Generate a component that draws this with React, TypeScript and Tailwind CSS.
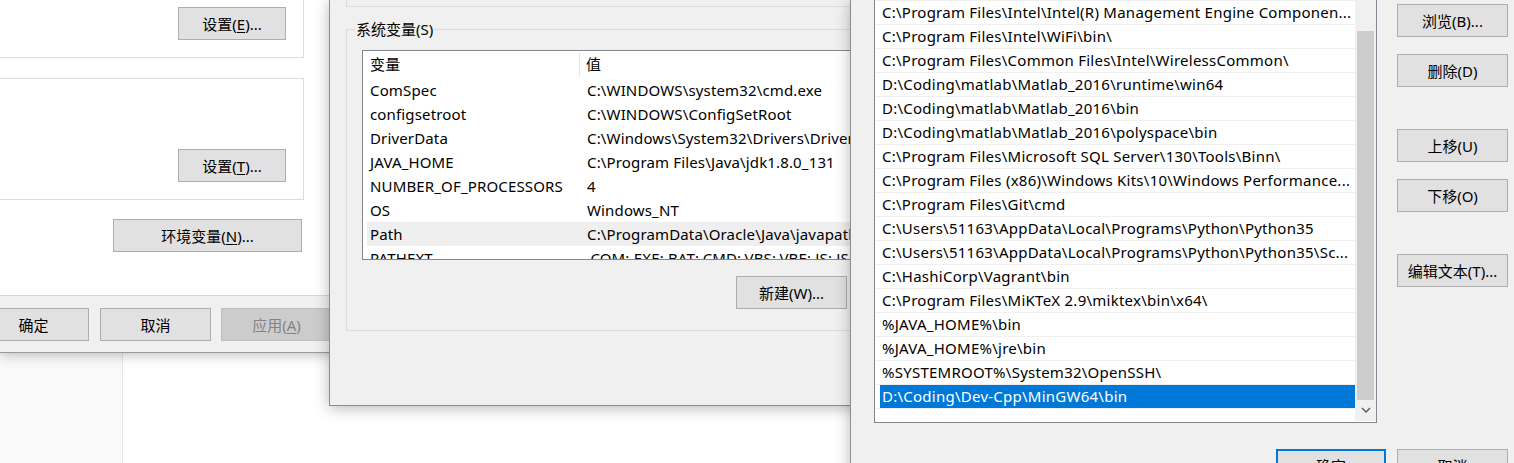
import clsx from 'clsx';
import type { ReactNode } from 'react';

const SYS_VARS = [
  ['ComSpec', 'C:\\WINDOWS\\system32\\cmd.exe'],
  ['configsetroot', 'C:\\WINDOWS\\ConfigSetRoot'],
  ['DriverData', 'C:\\Windows\\System32\\Drivers\\DriverData'],
  ['JAVA_HOME', 'C:\\Program Files\\Java\\jdk1.8.0_131'],
  ['NUMBER_OF_PROCESSORS', '4'],
  ['OS', 'Windows_NT'],
  ['Path', 'C:\\ProgramData\\Oracle\\Java\\javapath;C:\\WINDOWS\\system32'],
  ['PATHEXT', '.COM;.EXE;.BAT;.CMD;.VBS;.VBE;.JS;.JSE;.WSF;.WSH;.MSC'],
];

const PATHS = [
  'C:\\Program Files\\Intel\\Intel(R) Management Engine Componen...',
  'C:\\Program Files\\Intel\\WiFi\\bin\\',
  'C:\\Program Files\\Common Files\\Intel\\WirelessCommon\\',
  'D:\\Coding\\matlab\\Matlab_2016\\runtime\\win64',
  'D:\\Coding\\matlab\\Matlab_2016\\bin',
  'D:\\Coding\\matlab\\Matlab_2016\\polyspace\\bin',
  'C:\\Program Files\\Microsoft SQL Server\\130\\Tools\\Binn\\',
  'C:\\Program Files (x86)\\Windows Kits\\10\\Windows Performance...',
  'C:\\Program Files\\Git\\cmd',
  'C:\\Users\\51163\\AppData\\Local\\Programs\\Python\\Python35',
  'C:\\Users\\51163\\AppData\\Local\\Programs\\Python\\Python35\\Sc...',
  'C:\\HashiCorp\\Vagrant\\bin',
  'C:\\Program Files\\MiKTeX 2.9\\miktex\\bin\\x64\\',
  '%JAVA_HOME%\\bin',
  '%JAVA_HOME%\\jre\\bin',
  '%SYSTEMROOT%\\System32\\OpenSSH\\',
  'D:\\Coding\\Dev-Cpp\\MinGW64\\bin',
];

function Btn({
  children,
  className,
  disabled,
  primary,
}: {
  children: ReactNode;
  className?: string;
  disabled?: boolean;
  primary?: boolean;
}) {
  return (
    <div
      className={clsx(
        'flex shrink-0 items-center justify-center whitespace-nowrap text-[15px] leading-[20px]',
        disabled
          ? 'border border-[#bfbfbf] bg-[#cccccc] text-[#838383]'
          : primary
            ? 'border-2 border-[#0078d7] bg-[#e1e1e1] text-black'
            : 'border border-[#adadad] bg-[#e1e1e1] text-black',
        className,
      )}
    >
      {children}
    </div>
  );
}

function Key({ k }: { k: string }) {
  return <span className="underline underline-offset-2">{k}</span>;
}

function SystemProperties() {
  return (
    <div className="absolute left-0 top-0 flex h-[353px] w-[345px] flex-col border-b border-[#9a9a9a] bg-[#f0f0f0] shadow-[0_2px_12px_rgba(0,0,0,0.25)]">
      <div className="h-[296px] border-b border-[#d9d9d9] bg-white">
        <div className="flex h-[58px] w-[304px] items-start justify-end border-b border-r border-[#dcdcdc] pr-[17px] pt-[7px]">
          <Btn className="h-[33px] w-[108px]">
            设置(<Key k="E" />)...
          </Btn>
        </div>
        <div className="mt-[20px] flex h-[122px] w-[304px] items-end justify-end border-y border-r border-[#dcdcdc] pb-[17px] pr-[17px]">
          <Btn className="h-[33px] w-[108px]">
            设置(<Key k="T" />)...
          </Btn>
        </div>
        <Btn className="ml-[113px] mt-[19px] h-[33px] w-[189px]">
          环境变量(<Key k="N" />)...
        </Btn>
      </div>
      <div className="flex pt-[12px]">
        <Btn className="-ml-[22px] h-[33px] w-[111px]">确定</Btn>
        <Btn className="ml-[11px] h-[33px] w-[111px]">取消</Btn>
        <Btn disabled className="ml-[10px] h-[33px] w-[111px]">
          应用(<Key k="A" />)
        </Btn>
      </div>
    </div>
  );
}

function EnvironmentVariables() {
  return (
    <div className="absolute left-[329px] top-0 h-[406px] w-[600px] border-b border-l border-[#8c8c8c] bg-[#f0f0f0] shadow-[0_2px_14px_rgba(0,0,0,0.28)]">
      <div className="ml-[16px] h-[7px] w-[600px] border-b border-l border-[#dcdcdc]" />
      <div className="relative ml-[16px] mt-[22px] h-[302px] w-[600px] border border-[#dcdcdc]">
        <span className="absolute -top-[11px] left-[8px] bg-[#f0f0f0] px-px text-[15px] leading-[20px] text-black">
          系统变量(S)
        </span>
        {/* list runs on under the path editor; clip it at that window's edge */}
        <div className="ml-[15px] mt-[20px] h-[210px] w-[488px] overflow-hidden border-y border-l border-[#828790] bg-white text-[15px] tracking-[0.15px] text-black">
          <div className="flex h-[27px] items-center">
            <div className="w-[217px] shrink-0 border-r border-[#e5e5e5] pl-[7px] leading-[25px]">变量</div>
            <div className="pl-[6px] leading-[25px]">值</div>
          </div>
          {SYS_VARS.map(([name, value]) => (
            <div
              key={name}
              className={clsx(
                'ml-[4px] flex h-[24px] items-center whitespace-nowrap',
                name === 'Path' && 'bg-[#efefef]',
              )}
            >
              <div className="w-[213px] shrink-0 pl-[3px]">{name}</div>
              <div className="shrink-0 pl-[7px]">{value}</div>
            </div>
          ))}
        </div>
        <Btn className="ml-[389px] mt-[16px] h-[33px] w-[111px]">新建(W)...</Btn>
      </div>
    </div>
  );
}

function EditPath() {
  return (
    <div className="absolute left-[850px] top-0 h-[480px] w-[700px] border-l border-[#8c8c8c] bg-[#f0f0f0] shadow-[0_2px_14px_rgba(0,0,0,0.28)]">
      <div className="flex">
        <div className="ml-[23px] flex h-[423px] w-[503px] border-x border-b border-[#828790] bg-white">
          <div className="w-[480px] overflow-hidden text-[15px] tracking-[0.25px] text-black">
            <div className="h-px bg-[#f0f0f0]" />
            {PATHS.map((p, i) =>
              i === PATHS.length - 1 ? (
                <div key={p} className="h-[24px] border-b border-[#f0f0f0]">
                  <div className="ml-[5px] flex h-[23px] items-center whitespace-nowrap bg-[#0078d7] pl-[2px] text-white">
                    {p}
                  </div>
                </div>
              ) : (
                <div
                  key={p}
                  className="flex h-[24px] items-center whitespace-nowrap border-b border-[#f0f0f0] pl-[7px]"
                >
                  {p}
                </div>
              ),
            )}
          </div>
          <div className="flex h-[421px] w-[21px] flex-col bg-[#f0f0f0]">
            <div className="h-[31px]" />
            <div className="ml-[2px] h-[369px] w-[17px] bg-[#cdcdcd]" />
            <div className="flex h-[20px] items-center justify-center">
              <svg width="10" height="6" viewBox="0 0 10 6">
                <path d="M1 1 L5 5 L9 1" fill="none" stroke="#606060" strokeWidth="1.5" />
              </svg>
            </div>
          </div>
        </div>
        <div className="ml-[20px] flex flex-col pt-[4px]">
          <Btn className="h-[33px] w-[111px]">浏览(B)...</Btn>
          <Btn className="mt-[17px] h-[33px] w-[111px]">删除(D)</Btn>
          <Btn className="mt-[42px] h-[33px] w-[111px]">上移(U)</Btn>
          <Btn className="mt-[17px] h-[33px] w-[111px]">下移(O)</Btn>
          <Btn className="mt-[42px] h-[33px] w-[111px]">编辑文本(T)...</Btn>
        </div>
      </div>
      <div className="ml-[425px] mt-[26px] flex">
        <Btn primary className="h-[33px] w-[110px]">确定</Btn>
        <Btn className="ml-[11px] h-[33px] w-[111px]">取消</Btn>
      </div>
    </div>
  );
}

export default function App() {
  return (
    <div className="relative h-[463px] w-[1514px] overflow-hidden bg-white font-['Noto_Sans','Noto_Sans_CJK_SC',sans-serif]">
      <div className="flex h-full">
        <div className="w-[123px] border-r border-[#e6e6e6] bg-[#f9f9f9]" />
        <div className="flex-1 bg-white" />
      </div>
      <SystemProperties />
      <EnvironmentVariables />
      <EditPath />
    </div>
  );
}
